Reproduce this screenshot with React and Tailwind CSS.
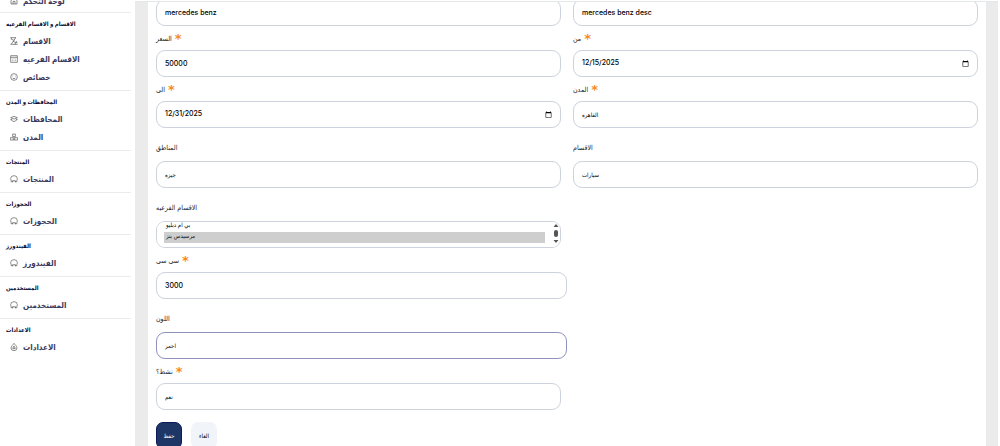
import React from "react";
import clsx from "clsx";

const groups = [
  {
    title: "الاقسام و الاقسام الفرعيه",
    items: [
      { name: "الاقسام", icon: "sections" },
      { name: "الاقسام الفرعيه", icon: "calendar" },
      { name: "خصائص", icon: "smile" },
    ],
  },
  {
    title: "المحافظات و المدن",
    items: [
      { name: "المحافظات", icon: "layers" },
      { name: "المدن", icon: "boxes" },
    ],
  },
  { title: "المنتجات", items: [{ name: "المنتجات", icon: "badge" }] },
  { title: "الحجوزات", items: [{ name: "الحجوزات", icon: "badge" }] },
  { title: "الفيندورز", items: [{ name: "الفيندورز", icon: "badge" }] },
  { title: "المستخدمين", items: [{ name: "المستخدمين", icon: "badge" }] },
  { title: "الاعدادات", items: [{ name: "الاعدادات", icon: "drop" }] },
];

const icons = {
  home: (
    <>
      <path d="M3 10 12 3l9 7v11H3z" />
      <path d="M9 21v-8h6v8" />
    </>
  ),
  sections: (
    <>
      <path d="M1 2h17M4 2v5l9 3M17 2l-5 8-8 11" />
      <path d="M9 13l7 3v6M1 22h22M16 17h6M19 12v5" />
    </>
  ),
  calendar: (
    <>
      <path d="M2 2h20v20H2zM2 7h20" />
      <path d="M6 12h2M11 12h2M16 12h2M6 17h2M11 17h2M16 17h2" />
    </>
  ),
  smile: (
    <>
      <circle cx="12" cy="12" r="10" />
      <path d="M7 14c2 4 8 4 10 0M8 8v2M16 8v2" />
    </>
  ),
  layers: (
    <>
      <path d="M12 4 22 8l-10 4L2 8z" />
      <path d="M5 11v5l7 4 7-4v-5M1 14h4M19 14h4" />
    </>
  ),
  boxes: (
    <>
      <path d="M8 3h8v8H8zM1 14h9v7H1zM14 14h9v7h-9z" />
      <path d="M10 21h4M12 11v3" />
    </>
  ),
  badge: (
    <>
      <path d="M5 19c-2-2-3-5-3-8a10 9 0 0 1 20 0c0 3-1 6-3 8" />
      <path d="M2 20h6l2-3h4l2 3h6M8 16v6M16 16v6" />
    </>
  ),
  drop: (
    <>
      <path d="M12 1c3 5 9 8 9 14a9 8 0 0 1-18 0c0-6 6-9 9-14z" />
      <path d="M12 9l-4 7h8zM12 16v3" />
    </>
  ),
};

function NavItem({ name, icon }) {
  return (
    <a
      href="#"
      className="flex h-[18px] items-center gap-[5px] pl-[10px] text-[8px] font-bold text-[#3a3a5c]"
    >
      <svg
        viewBox="0 0 24 24"
        className="h-2 w-2 shrink-0 fill-none stroke-[#555] stroke-2"
      >
        {icons[icon]}
      </svg>
      {name}
    </a>
  );
}

function Sidebar() {
  return (
    <aside className="w-[135px] shrink-0 pr-1">
      <nav className="-mt-2">
        <div className="pb-[2px]">
          <NavItem name="لوحة التحكم" icon="home" />
        </div>
        {groups.map((group) => (
          <section
            key={group.title}
            className="border-t border-[#ebebeb] pt-[3px] pb-1"
          >
            <h2 className="h-4 pl-[6px] text-[6px] leading-4 font-bold text-[#0a0a2e]">
              {group.title}
            </h2>
            {group.items.map((item) => (
              <NavItem key={item.name} name={item.name} icon={item.icon} />
            ))}
          </section>
        ))}
      </nav>
    </aside>
  );
}

const control =
  "block h-[27px] w-full appearance-none rounded-[9px] border bg-white px-2 font-medium text-black outline-none";
const textControl = clsx(control, "border-[#cdd2dc] text-[7px]");
const dateControl = clsx(
  textControl,
  "[&::-webkit-datetime-edit-month-field]:p-0 [&::-webkit-datetime-edit-day-field]:p-0 [&::-webkit-datetime-edit-year-field]:p-0 [&::-webkit-calendar-picker-indicator]:ml-0 [&::-webkit-calendar-picker-indicator]:h-[7px] [&::-webkit-calendar-picker-indicator]:w-[7px] [&::-webkit-calendar-picker-indicator]:p-0"
);

function Field({ id, label, required, wide, children }) {
  return (
    <div className={clsx(wide && "-mr-[6px]")}>
      <label
        htmlFor={id}
        className={clsx(
          "flex items-center gap-[3px] text-[7px] text-[#222]",
          required ? "h-6 pt-[2px]" : "h-[33px] pt-2"
        )}
      >
        {label}
        {required && (
          <span className="h-4 font-['DejaVu_Sans',sans-serif] text-[13px] leading-4 font-bold text-[#f58a1f]">
            *
          </span>
        )}
      </label>
      {children}
    </div>
  );
}

function Choice({ id, value, active }) {
  return (
    <select
      id={id}
      className={clsx(
        control,
        "text-[6px]",
        active ? "border-[#8d93bd]" : "border-[#cdd2dc]"
      )}
      defaultValue={value}
    >
      <option>{value}</option>
    </select>
  );
}

const optionClass = "h-[11px] min-h-0 px-[2px] py-0 leading-[11px]";

function SubSections() {
  const list = React.useRef(null);
  // keep the chosen option in view
  React.useEffect(() => {
    list.current.scrollTop = 12;
  }, []);
  return (
    <div className="relative">
      <select
        id="sub"
        multiple
        ref={list}
        defaultValue={["مرسيدس بنز"]}
        className="block h-[27px] w-full rounded-[9px] border border-[#cdd2dc] bg-white pr-[15px] pb-1 pl-[7px] text-[6px] text-black outline-none [scrollbar-width:none]"
      >
        <option className={optionClass}>تويوتا</option>
        <option className={optionClass}>بي ام دبليو</option>
        <option className={optionClass}>مرسيدس بنز</option>
      </select>
      <svg
        viewBox="0 0 6 20"
        className="absolute top-[3px] right-[2px] h-5 w-[6px] fill-[#555]"
      >
        <path d="M3 0l2.500 3h-5zM3 19l2.500-3h-5z" />
        <rect x="1" y="6" width="4" height="7" rx="2" />
      </svg>
    </div>
  );
}

function OfferForm() {
  return (
    <form className="mr-3 ml-[13px] -mt-[3px] grid grid-cols-2 gap-x-3 bg-white px-2 pb-6">
      <input aria-label="الاسم" defaultValue="mercedes benz" className={textControl} />
      <input aria-label="الوصف" defaultValue="mercedes benz desc" className={textControl} />
      <Field id="price" label="السعر" required>
        <input id="price" defaultValue="50000" className={textControl} />
      </Field>
      <Field id="from" label="من" required>
        <input id="from" type="date" defaultValue="2025-12-15" className={dateControl} />
      </Field>
      <Field id="to" label="الى" required>
        <input id="to" type="date" defaultValue="2025-12-31" className={dateControl} />
      </Field>
      <Field id="city" label="المدن" required>
        <Choice id="city" value="القاهره" />
      </Field>
      <Field id="area" label="المناطق">
        <Choice id="area" value="جيزه" />
      </Field>
      <Field id="section" label="الاقسام">
        <Choice id="section" value="سيارات" />
      </Field>
      <div className="col-span-2 grid grid-cols-2 gap-x-3 *:col-start-1">
        <Field id="sub" label="الاقسام الفرعيه">
          <SubSections />
        </Field>
        <Field id="cc" label="سى سى" required wide>
          <input id="cc" defaultValue="3000" className={textControl} />
        </Field>
        <Field id="color" label="اللون" wide>
          <Choice id="color" value="احمر" active />
        </Field>
        <Field id="active" label="نشط؟" required>
          <Choice id="active" value="نعم" />
        </Field>
        <div className="mt-3 flex gap-[9px]">
          <button
            type="submit"
            className="h-[27px] w-[26px] rounded-[7px] border border-[#0b1a55] bg-[#1e3666] text-[6px] text-white"
          >
            حفظ
          </button>
          <button
            type="button"
            className="h-[27px] w-[26px] rounded-[7px] bg-[#f1f5f9] text-[6px] text-black"
          >
            الغاء
          </button>
        </div>
      </div>
    </form>
  );
}

export default function App() {
  return (
    <div className="flex h-screen overflow-hidden bg-white pr-[2px] font-['Inter','DejaVu_Sans_Condensed','DejaVu_Sans',sans-serif]">
      <Sidebar />
      <main className="flex min-w-0 flex-1 flex-col">
        <header className="h-[2px] shrink-0 border-b border-[#e4e8e8] bg-white" />
        <div className="flex-1 overflow-hidden bg-[#ebebeb]">
          <OfferForm />
        </div>
      </main>
    </div>
  );
}
